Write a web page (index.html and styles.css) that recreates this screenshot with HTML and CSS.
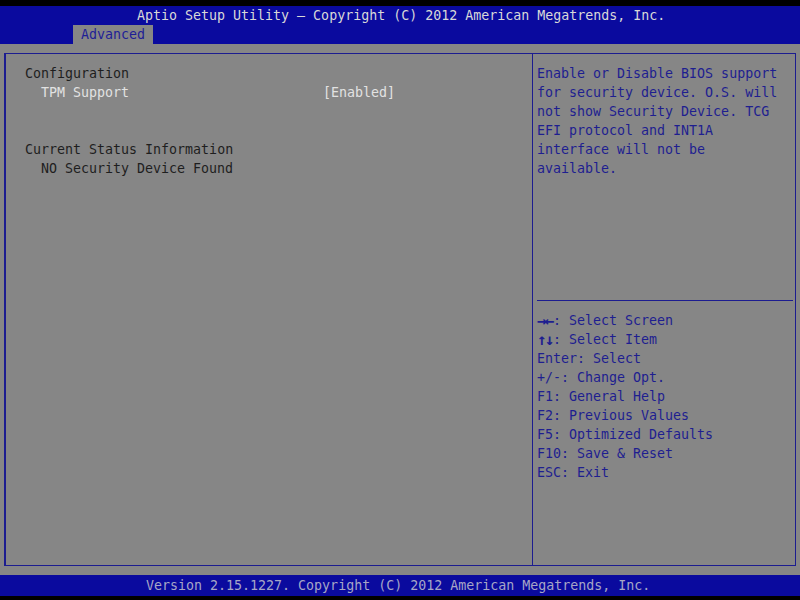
FILE: index.html
```html
<!DOCTYPE html>
<html>
<head>
<meta charset="utf-8">
<link rel="stylesheet" href="styles.css">
</head>
<body>
<div class="screen">
  <div class="topbar"></div>
  <div class="header">
    <div class="title">Aptio Setup Utility – Copyright (C) 2012 American Megatrends, Inc.</div>
    <div class="tabs"><span class="tab">Advanced</span></div>
  </div>
  <div class="main">
    <div class="frame">
      <div class="left">
        <div class="line heading">Configuration</div>
        <div class="line row"><span class="label">TPM Support</span><span class="value">[Enabled]</span></div>
        <div class="line"></div>
        <div class="line"></div>
        <div class="line heading">Current Status Information</div>
        <div class="line info">NO Security Device Found</div>
      </div>
      <div class="right">
        <div class="desc">
          <div class="line">Enable or Disable BIOS support</div>
          <div class="line">for security device. O.S. will</div>
          <div class="line">not show Security Device. TCG</div>
          <div class="line">EFI protocol and INT1A</div>
          <div class="line">interface will not be</div>
          <div class="line">available.</div>
        </div>
        <div class="sep"></div>
        <div class="keys">
          <div class="line"><span class="arr">→←</span>: Select Screen</div>
          <div class="line"><span class="arr">↑↓</span>: Select Item</div>
          <div class="line">Enter: Select</div>
          <div class="line">+/-: Change Opt.</div>
          <div class="line">F1: General Help</div>
          <div class="line">F2: Previous Values</div>
          <div class="line">F5: Optimized Defaults</div>
          <div class="line">F10: Save &amp; Reset</div>
          <div class="line">ESC: Exit</div>
        </div>
      </div>
    </div>
  </div>
  <div class="footer">Version 2.15.1227. Copyright (C) 2012 American Megatrends, Inc.</div>
  <div class="bottombar"></div>
</div>
</body>
</html>
```
FILE: styles.css
```css
html, body {
  margin: 0;
  padding: 0;
  background: #000;
}
.screen {
  width: 800px;
  height: 600px;
  display: flex;
  flex-direction: column;
  font-family: "DejaVu Sans Mono", "Liberation Mono", monospace;
  font-size: 13.3px;
  line-height: 19px;
}
.topbar {
  height: 6px;
  background: #000;
}
.header {
  height: 38px;
  background: #0a0a9e;
  color: #d8d8d8;
  display: flex;
  flex-direction: column;
}
.title {
  height: 19px;
  padding-left: 137px;
  white-space: pre;
}
.tabs {
  height: 19px;
  padding-left: 73px;
  display: flex;
}
.tab {
  background: #868686;
  color: #1e1e96;
  padding: 0 8px;
  width: 64px;
}
.main {
  height: 531px;
  background: #868686;
  display: flex;
  padding: 9px 4px 9px 4px;
  box-sizing: border-box;
}
.frame {
  flex: 1;
  display: flex;
  border: 1px solid #1c1c90;
  border-left-width: 2px;
}
.left {
  width: 507px;
  border-right: 1px solid #1c1c90;
  padding: 10px 0 0 19px;
  color: #1e1e1e;
}
.line {
  height: 19px;
  white-space: pre;
}
.row {
  display: flex;
}
.label {
  width: 282px;
  padding-left: 16px;
  color: #e2e2e2;
}
.value {
  color: #e2e2e2;
}
.info {
  padding-left: 16px;
}
.right {
  flex: 1;
  display: flex;
  flex-direction: column;
  color: #1e1e90;
}
.desc {
  height: 236px;
  padding: 10px 0 0 4px;
}
.sep {
  height: 1px;
  background: #1c1c90;
  margin: 0 2px 0 4px;
}
.keys {
  padding: 10px 0 0 4px;
}
.arr {
  display: inline-block;
  width: 16px;
  font-size: 16px;
  font-weight: bold;
  letter-spacing: -2px;
  line-height: 19px;
  vertical-align: top;
}
.footer {
  height: 21px;
  line-height: 21px;
  background: #0a0a9e;
  color: #a6a6c6;
  padding-left: 146px;
  white-space: pre;
}
.bottombar {
  height: 4px;
  background: #000;
}
```
